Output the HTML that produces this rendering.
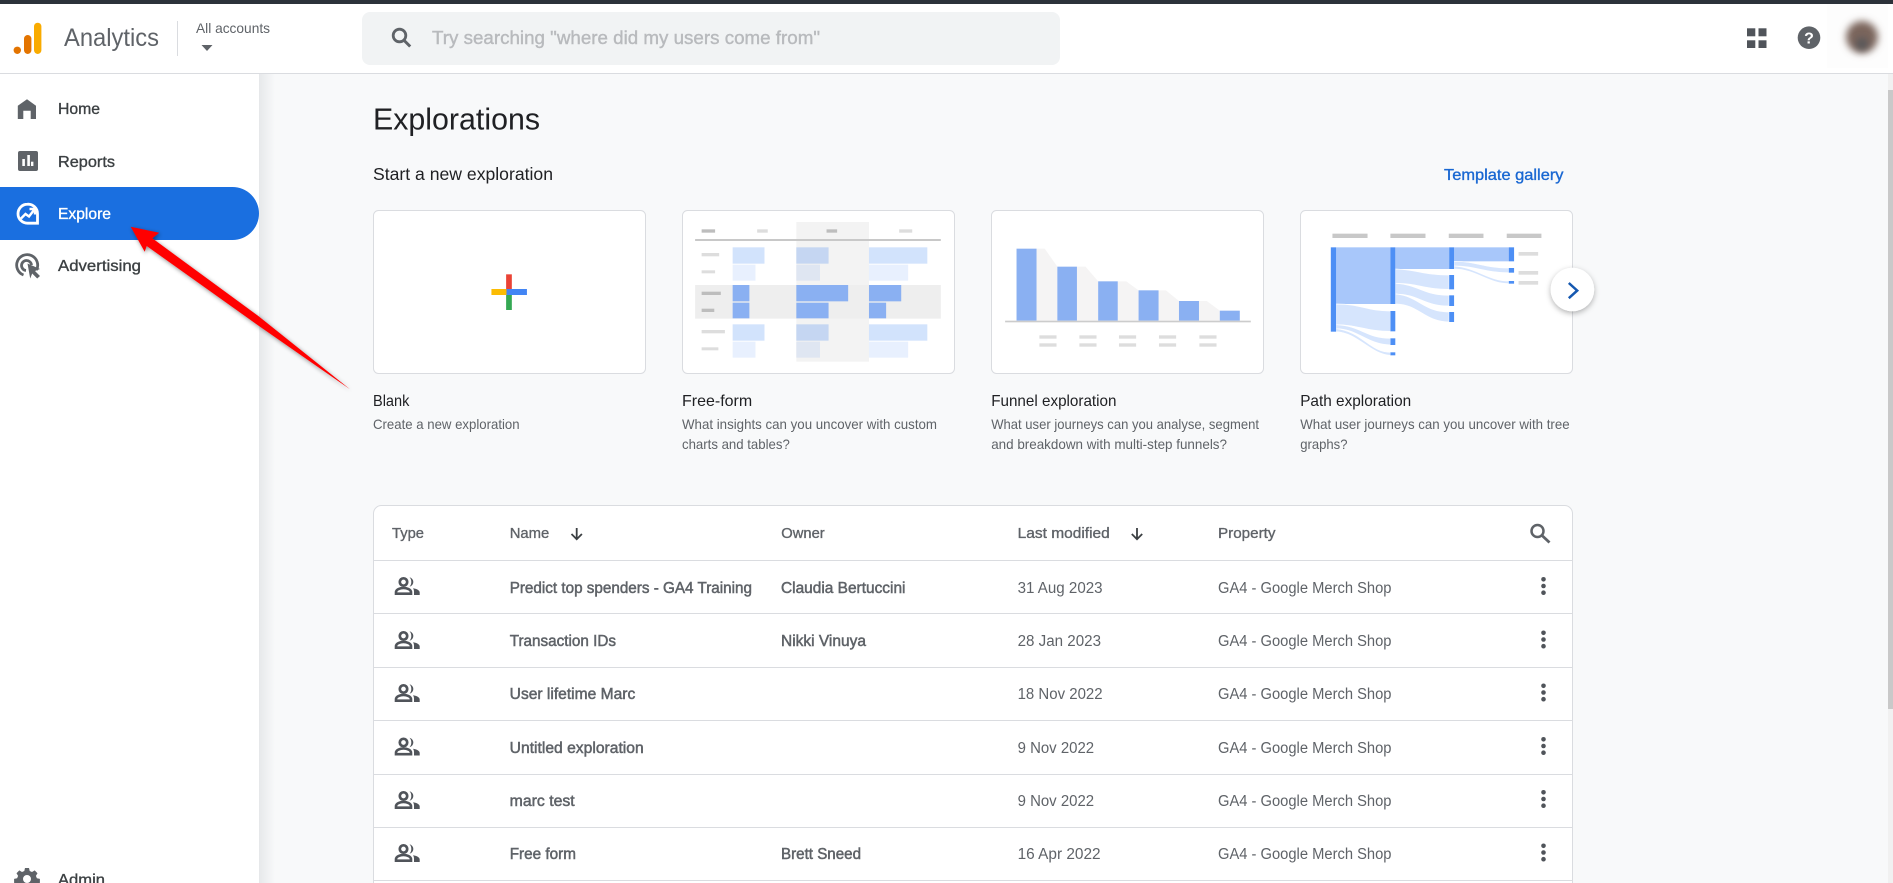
<!DOCTYPE html>
<html lang="en">
<head>
<meta charset="utf-8">
<title>Explorations - Analytics</title>
<style>
html,body{margin:0;padding:0;width:1893px;height:883px;overflow:hidden;background:#f8f9fa}
svg{display:block;position:absolute;left:0;top:0}
text{font-family:"Liberation Sans",sans-serif;white-space:pre}
.nav{font-size:16px;fill:#3c4043;stroke:#3c4043;stroke-width:.35px}
.th{font-size:15px;fill:#5f6368;stroke:#5f6368;stroke-width:.35px}
.nm{font-size:15.500px;fill:#5f6368;stroke:#5f6368;stroke-width:.5px}
.rg{font-size:15.500px;fill:#5f6368}
.ct{font-size:16px;fill:#202124}
.cd{font-size:14px;fill:#5f6368}
</style>
</head>
<body>
<svg width="1893" height="883" viewBox="0 0 1893 883" xmlns="http://www.w3.org/2000/svg">
<defs>
<linearGradient id="sd" x1="0" x2="1" y1="0" y2="0"><stop offset="0" stop-color="#e6e8ea"/><stop offset="1" stop-color="#f8f9fa"/></linearGradient>
<filter id="bl" x="-80%" y="-80%" width="260%" height="260%"><feGaussianBlur stdDeviation="3.600"/></filter>
<filter id="ds" x="-50%" y="-50%" width="200%" height="200%"><feDropShadow dx="0" dy="2" stdDeviation="3" flood-color="#000" flood-opacity=".3"/></filter>
<filter id="as" x="-20%" y="-20%" width="140%" height="140%"><feDropShadow dx="1" dy="1.500" stdDeviation="2" flood-color="#000" flood-opacity=".45"/></filter>
<g id="grp" fill="#50545a">
<circle cx="8.800" cy="5" r="3.700" fill="none" stroke="#50545a" stroke-width="2.700"/>
<path d="M14.800 .3a4.800 4.800 0 0 1 0 9.400c1.300-1.300 1.800-2.900 1.800-4.700s-.5-3.400-1.800-4.700z"/>
<path d="M1.300 16.700v-1.500c0-2.900 4.200-4.200 7.500-4.200s7.500 1.300 7.500 4.200v1.500z" fill="none" stroke="#50545a" stroke-width="2.600"/>
<path d="M18.300 11.200c3.200.5 6.700 1.800 6.700 4.300v2.500h-5.700v-2.800c0-1.600-.2-3-1-4z"/>
</g>
<g id="keb" fill="#50545a"><circle cx="0" cy="-6.700" r="2.300"/><circle cx="0" cy="0" r="2.300"/><circle cx="0" cy="6.700" r="2.300"/></g>
</defs>

<!-- main bg -->
<rect x="0" y="0" width="1893" height="883" fill="#f8f9fa"/>
<rect x="259" y="74" width="16" height="809" fill="url(#sd)"/>
<!-- scrollbar -->
<rect x="1888" y="74" width="5" height="809" fill="#f1f1f1"/>
<rect x="1888" y="90" width="5" height="619" fill="#c9c9c9"/>

<!-- header -->
<rect x="0" y="4" width="1893" height="69" fill="#fff"/>
<rect x="0" y="0" width="1893" height="4" fill="#2c323a"/>
<rect x="0" y="73" width="1893" height="1" fill="#dadce0"/>
<circle cx="17.300" cy="50.300" r="3.700" fill="#e37400"/>
<rect x="24" y="35" width="7.400" height="19" rx="3.700" fill="#e37400"/>
<rect x="34" y="22.700" width="7.400" height="31.300" rx="3.700" fill="#f9ab00"/>
<text x="64" y="46" font-size="25" fill="#5f6368" textLength="95" lengthAdjust="spacingAndGlyphs">Analytics</text>
<rect x="177" y="21" width="1" height="35" fill="#dadce0"/>
<text x="196" y="33" font-size="14" fill="#5f6368" textLength="74" lengthAdjust="spacingAndGlyphs">All accounts</text>
<path d="M201.500 45h11l-5.500 6z" fill="#5f6368"/>
<rect x="362" y="12" width="698" height="53" rx="8" fill="#f1f3f4"/>
<circle cx="399.500" cy="35.500" r="6.300" fill="none" stroke="#5f6368" stroke-width="2.800"/>
<path d="M404.200 40.500l6 6" stroke="#5f6368" stroke-width="3" fill="none"/>
<text x="432" y="44" font-size="18.500" fill="#b8babd" stroke="#b8babd" stroke-width=".4" textLength="388" lengthAdjust="spacingAndGlyphs">Try searching "where did my users come from"</text>
<g fill="#50545a"><rect x="1747" y="28.300" width="8.300" height="8"/><rect x="1758.500" y="28.300" width="8" height="8"/><rect x="1747" y="40.300" width="8.300" height="7.700"/><rect x="1758.500" y="40.300" width="8" height="7.700"/></g>
<circle cx="1809" cy="37.700" r="11.300" fill="#5f6368"/>
<text x="1809" y="43.500" font-size="16" font-weight="700" fill="#fff" text-anchor="middle">?</text>
<rect x="1827" y="4" width="61" height="64" fill="#fdfdfd"/>
<circle cx="1862" cy="37" r="16" fill="#7a655b" filter="url(#bl)"/>
<circle cx="1862" cy="44" r="6" fill="#55565a" filter="url(#bl)"/>

<!-- sidebar -->
<rect x="0" y="74" width="259" height="809" fill="#fff"/>
<path d="M0 187h232.500a26.500 26.500 0 0 1 0 53H0z" fill="#1a6fe0"/>
<path d="M27 99.300L36 105.800V119H30.700V110.700H23.300V119H17.800V105.800z" fill="#5f6368"/>
<rect x="18" y="151" width="20" height="20" rx="2" fill="#5f6368"/>
<g fill="#fff"><rect x="22.300" y="159" width="2.600" height="7"/><rect x="27.300" y="155" width="2.600" height="11"/><rect x="31" y="161.700" width="2.400" height="4.300"/></g>
<path d="M27.500 204.200a9.500 9.500 0 1 0 0 19h10v-9.500a9.500 9.500 0 0 0-10-9.500z" fill="none" stroke="#fff" stroke-width="2.800"/>
<path d="M21 218.500l4.500-4.500 3.500 2.500 5-6.500M29.500 209h5.500v5.500" fill="none" stroke="#fff" stroke-width="2.400"/>
<path d="M36.500 270a10.500 10.500 0 1 0-13 5" fill="none" stroke="#5f6368" stroke-width="2.800"/>
<path d="M31.500 265a5 5 0 1 0-5.500 5.500" fill="none" stroke="#5f6368" stroke-width="2.800"/>
<path d="M27.500 263.500l12.500 5.500-5 2 5 5-2.800 2.500-5-5-2 5z" fill="#5f6368"/>
<path d="M25 868h4l.7 3 2.300 1 2.700-1.600 2.800 2.800-1.600 2.700 1 2.300 3 .7v4l-3 .7-1 2.300 1.600 2.700-2.800 2.800-2.700-1.600-2.300 1-.7 3h-4l-.7-3-2.300-1-2.700 1.600-2.800-2.800 1.600-2.700-1-2.300-3-.7v-4l3-.7 1-2.300-1.600-2.700 2.800-2.800 2.700 1.600 2.300-1zM27 875a4 4 0 1 0 0 8 4 4 0 0 0 0-8z" fill="#5f6368" fill-rule="evenodd"/>
<text class="nav" x="58" y="114" textLength="42" lengthAdjust="spacingAndGlyphs">Home</text>
<text class="nav" x="58" y="167" textLength="57" lengthAdjust="spacingAndGlyphs">Reports</text>
<text class="nav" x="58" y="219" textLength="53" lengthAdjust="spacingAndGlyphs" style="fill:#fff;stroke:#fff">Explore</text>
<text class="nav" x="58" y="271" textLength="83" lengthAdjust="spacingAndGlyphs">Advertising</text>
<text class="nav" x="58" y="885" textLength="47" lengthAdjust="spacingAndGlyphs">Admin</text>

<!-- headings -->
<text x="373" y="129.500" font-size="31" fill="#202124" textLength="167" lengthAdjust="spacingAndGlyphs">Explorations</text>
<text x="373" y="180" font-size="17.500" fill="#202124" textLength="180" lengthAdjust="spacingAndGlyphs">Start a new exploration</text>
<text x="1444" y="180" font-size="16" fill="#1967d2" stroke="#1967d2" stroke-width=".35" textLength="119.500" lengthAdjust="spacingAndGlyphs">Template gallery</text>

<!-- cards -->
<g fill="#fff" stroke="#dadce0" stroke-width="1">
<rect x="373.500" y="210.500" width="272" height="163" rx="5"/>
<rect x="682.500" y="210.500" width="272" height="163" rx="5"/>
<rect x="991.500" y="210.500" width="272" height="163" rx="5"/>
<rect x="1300.500" y="210.500" width="272" height="163" rx="5"/>
</g>

<g transform="translate(340 190) scale(.40816 .33333)">
<rect x="407" y="253" width="14" height="53" fill="#ea4335"/>
<rect x="407" y="306" width="14" height="54" fill="#34a853"/>
<rect x="371" y="297" width="37" height="18" fill="#fbbc04"/>
<rect x="408" y="297" width="50" height="18" fill="#4285f4"/>
<!-- free form -->
<rect x="1118" y="96" width="178" height="419" fill="#f3f3f3"/>
<rect x="870" y="285" width="602" height="101" fill="#eeeeee"/>
<rect x="870" y="147" width="602" height="6" fill="#c8c8c8"/>
<g fill="#bdbdbd"><rect x="886" y="118" width="33" height="10"/><rect x="1192" y="118" width="26" height="10"/><rect x="886" y="305" width="47" height="10"/><rect x="886" y="356" width="31" height="10"/></g>
<g fill="#dddddd"><rect x="1022" y="118" width="26" height="10"/><rect x="1370" y="118" width="32" height="10"/><rect x="886" y="189" width="43" height="10"/><rect x="886" y="241" width="33" height="9"/><rect x="886" y="420" width="57" height="10"/><rect x="886" y="472" width="41" height="9"/></g>
<g fill="#d2e3fc"><rect x="962" y="172" width="78" height="49"/><rect x="962" y="403" width="78" height="49"/><rect x="1296" y="172" width="143" height="49"/><rect x="1296" y="403" width="143" height="49"/></g>
<g fill="#e8f0fe"><rect x="962" y="224" width="56" height="48"/><rect x="962" y="455" width="56" height="48"/><rect x="1296" y="224" width="96" height="48"/><rect x="1296" y="455" width="96" height="48"/></g>
<g fill="#c5d6f2"><rect x="1118" y="172" width="79" height="49"/><rect x="1118" y="403" width="79" height="49"/></g>
<g fill="#dfe6f2"><rect x="1118" y="224" width="58" height="48"/><rect x="1118" y="455" width="58" height="48"/></g>
<g fill="#8ab0f2"><rect x="962" y="285" width="41" height="49"/><rect x="962" y="338" width="41" height="47"/><rect x="1118" y="285" width="127" height="49"/><rect x="1118" y="338" width="79" height="47"/><rect x="1296" y="285" width="79" height="49"/><rect x="1296" y="338" width="42" height="47"/></g>
</g>

<g transform="translate(970 190) scale(.40816 .33333)">
<!-- funnel -->
<g fill="#f5f4f4">
<path d="M163 176H183L214 230V392H163z"/><path d="M262 230H283L314 274V392H262z"/><path d="M362 274H383L413 301V392H362z"/><path d="M462 301H480L512 333V392H462z"/><path d="M561 333H580L612 362V392H561z"/>
</g>
<g fill="#8ab0f2"><rect x="114" y="176" width="49" height="216"/><rect x="214" y="230" width="48" height="162"/><rect x="314" y="274" width="48" height="118"/><rect x="413" y="301" width="49" height="91"/><rect x="512" y="333" width="49" height="59"/><rect x="612" y="362" width="49" height="30"/></g>
<rect x="86" y="392" width="602" height="5" fill="#cccccc"/>
<g fill="#dddddd">
<rect x="170" y="436" width="42" height="10"/><rect x="268" y="436" width="42" height="10"/><rect x="365" y="436" width="42" height="10"/><rect x="463" y="436" width="42" height="10"/><rect x="562" y="436" width="42" height="10"/>
<rect x="170" y="460" width="42" height="10"/><rect x="268" y="460" width="42" height="10"/><rect x="365" y="460" width="42" height="10"/><rect x="463" y="460" width="42" height="10"/><rect x="562" y="460" width="42" height="10"/>
</g>
<!-- path -->
<g fill="#c8c8c8"><rect x="888" y="131" width="86" height="13"/><rect x="1030" y="131" width="86" height="13"/><rect x="1173" y="131" width="85" height="13"/><rect x="1315" y="131" width="85" height="13"/></g>
<g fill="#a8c7fa"><rect x="897" y="172" width="133" height="170"/><rect x="1042" y="172" width="132" height="65"/><rect x="1186" y="172" width="134" height="42"/></g>
<g fill="#d6e5fd" stroke="#fff" stroke-width="2">
<path d="M897 342C960 342 970 363 1030 363V424C970 424 950 404 897 404z"/>
<path d="M897 404C960 408 970 445 1030 445V465C970 462 950 416 897 416z"/>
<path d="M897 416C960 424 980 487 1030 487V496C980 492 950 428 897 425z"/>
<path d="M1042 237C1100 240 1110 255 1174 255V298C1110 298 1100 280 1042 280z"/>
<path d="M1042 280C1100 284 1110 316 1174 316V348C1110 348 1100 312 1042 312z"/>
<path d="M1042 312C1100 318 1110 366 1174 366V396C1110 394 1100 342 1042 342z"/>
<path d="M1186 214C1240 214 1260 234 1320 234V248C1260 248 1240 228 1186 228z"/>
<path d="M1186 228C1240 232 1270 273 1320 273V281C1270 281 1240 238 1186 237z"/>
</g>
<g fill="#4d8ff5">
<rect x="884" y="172" width="13" height="253"/>
<rect x="1030" y="172" width="12" height="170"/><rect x="1030" y="363" width="12" height="61"/><rect x="1030" y="445" width="12" height="20"/><rect x="1030" y="487" width="12" height="9"/>
<rect x="1174" y="172" width="12" height="65"/><rect x="1174" y="255" width="12" height="43"/><rect x="1174" y="316" width="12" height="32"/><rect x="1174" y="366" width="12" height="30"/>
<rect x="1320" y="172" width="13" height="42"/><rect x="1320" y="234" width="13" height="14"/><rect x="1320" y="273" width="13" height="8"/>
</g>
<g fill="#dddddd"><rect x="1344" y="186" width="48" height="11"/><rect x="1344" y="243" width="48" height="11"/><rect x="1344" y="273" width="48" height="11"/></g>
</g>

<circle cx="1572.400" cy="289.500" r="21.800" fill="#fff" filter="url(#ds)"/>
<path d="M1568.800 283l8.400 7.600-8.400 7.600" fill="none" stroke="#1558b0" stroke-width="2.500"/>

<text class="ct" x="373" y="406" textLength="36.400" lengthAdjust="spacingAndGlyphs">Blank</text>
<text class="ct" x="682" y="406" textLength="70.200" lengthAdjust="spacingAndGlyphs">Free-form</text>
<text class="ct" x="991.200" y="406" textLength="125.300" lengthAdjust="spacingAndGlyphs">Funnel exploration</text>
<text class="ct" x="1300.200" y="406" textLength="111" lengthAdjust="spacingAndGlyphs">Path exploration</text>
<text class="cd" x="373" y="429" textLength="146.600" lengthAdjust="spacingAndGlyphs">Create a new exploration</text>
<text class="cd" x="682" y="429" textLength="255" lengthAdjust="spacingAndGlyphs">What insights can you uncover with custom</text>
<text class="cd" x="682" y="449" textLength="107.800" lengthAdjust="spacingAndGlyphs">charts and tables?</text>
<text class="cd" x="991.200" y="429" textLength="267.800" lengthAdjust="spacingAndGlyphs">What user journeys can you analyse, segment</text>
<text class="cd" x="991.200" y="449" textLength="235.800" lengthAdjust="spacingAndGlyphs">and breakdown with multi-step funnels?</text>
<text class="cd" x="1300.200" y="429" textLength="269.400" lengthAdjust="spacingAndGlyphs">What user journeys can you uncover with tree</text>
<text class="cd" x="1300.200" y="449" textLength="47.300" lengthAdjust="spacingAndGlyphs">graphs?</text>

<!-- table -->
<rect x="373.500" y="505.500" width="1199" height="400" rx="8" fill="#fff" stroke="#dadce0"/>
<g fill="#dadce0">
<rect x="374" y="560" width="1198" height="1"/>
<rect x="374" y="613" width="1198" height="1"/>
<rect x="374" y="667" width="1198" height="1"/>
<rect x="374" y="720" width="1198" height="1"/>
<rect x="374" y="774" width="1198" height="1"/>
<rect x="374" y="827" width="1198" height="1"/>
<rect x="374" y="880" width="1198" height="1"/>
</g>
<text class="th" x="392" y="538" textLength="32" lengthAdjust="spacingAndGlyphs">Type</text>
<text class="th" x="509.700" y="538" textLength="39.600" lengthAdjust="spacingAndGlyphs">Name</text>
<text class="th" x="781.300" y="538" textLength="43.400" lengthAdjust="spacingAndGlyphs">Owner</text>
<text class="th" x="1017.600" y="538" textLength="92.200" lengthAdjust="spacingAndGlyphs">Last modified</text>
<text class="th" x="1218" y="538" textLength="57.500" lengthAdjust="spacingAndGlyphs">Property</text>
<path d="M576.700 528v11M571.500 534l5.200 5.200 5.200-5.200" fill="none" stroke="#3c4043" stroke-width="1.800"/>
<path d="M1137 528v11M1131.800 534l5.200 5.200 5.200-5.200" fill="none" stroke="#3c4043" stroke-width="1.800"/>
<circle cx="1537.500" cy="531" r="6" fill="none" stroke="#5f6368" stroke-width="2.500"/>
<path d="M1542 535.500l7.500 7" stroke="#5f6368" stroke-width="2.800" fill="none"/>

<use href="#grp" x="394.700" y="577"/>
<use href="#grp" x="394.700" y="631"/>
<use href="#grp" x="394.700" y="684"/>
<use href="#grp" x="394.700" y="737.500"/>
<use href="#grp" x="394.700" y="791"/>
<use href="#grp" x="394.700" y="844"/>
<use href="#keb" x="1543.500" y="586"/>
<use href="#keb" x="1543.500" y="639.500"/>
<use href="#keb" x="1543.500" y="692.500"/>
<use href="#keb" x="1543.500" y="746"/>
<use href="#keb" x="1543.500" y="799"/>
<use href="#keb" x="1543.500" y="852.500"/>

<text class="nm" x="509.700" y="593" textLength="242.300" lengthAdjust="spacingAndGlyphs">Predict top spenders - GA4 Training</text>
<text class="nm" x="781" y="593" textLength="124.500" lengthAdjust="spacingAndGlyphs">Claudia Bertuccini</text>
<text class="rg" x="1017.600" y="593" textLength="85" lengthAdjust="spacingAndGlyphs">31 Aug 2023</text>
<text class="rg" x="1218" y="593" textLength="173.500" lengthAdjust="spacingAndGlyphs">GA4 - Google Merch Shop</text>

<text class="nm" x="509.700" y="646" textLength="106.300" lengthAdjust="spacingAndGlyphs">Transaction IDs</text>
<text class="nm" x="781" y="646" textLength="85" lengthAdjust="spacingAndGlyphs">Nikki Vinuya</text>
<text class="rg" x="1017.600" y="646" textLength="83.400" lengthAdjust="spacingAndGlyphs">28 Jan 2023</text>
<text class="rg" x="1218" y="646" textLength="173.500" lengthAdjust="spacingAndGlyphs">GA4 - Google Merch Shop</text>

<text class="nm" x="509.700" y="699" textLength="125.600" lengthAdjust="spacingAndGlyphs">User lifetime Marc</text>
<text class="rg" x="1017.600" y="699" textLength="85" lengthAdjust="spacingAndGlyphs">18 Nov 2022</text>
<text class="rg" x="1218" y="699" textLength="173.500" lengthAdjust="spacingAndGlyphs">GA4 - Google Merch Shop</text>

<text class="nm" x="509.700" y="753" textLength="134" lengthAdjust="spacingAndGlyphs">Untitled exploration</text>
<text class="rg" x="1017.600" y="753" textLength="76.500" lengthAdjust="spacingAndGlyphs">9 Nov 2022</text>
<text class="rg" x="1218" y="753" textLength="173.500" lengthAdjust="spacingAndGlyphs">GA4 - Google Merch Shop</text>

<text class="nm" x="509.700" y="806" textLength="65" lengthAdjust="spacingAndGlyphs">marc test</text>
<text class="rg" x="1017.600" y="806" textLength="76.500" lengthAdjust="spacingAndGlyphs">9 Nov 2022</text>
<text class="rg" x="1218" y="806" textLength="173.500" lengthAdjust="spacingAndGlyphs">GA4 - Google Merch Shop</text>

<text class="nm" x="509.700" y="859" textLength="66.300" lengthAdjust="spacingAndGlyphs">Free form</text>
<text class="nm" x="781" y="859" textLength="80" lengthAdjust="spacingAndGlyphs">Brett Sneed</text>
<text class="rg" x="1017.600" y="859" textLength="83" lengthAdjust="spacingAndGlyphs">16 Apr 2022</text>
<text class="rg" x="1218" y="859" textLength="173.500" lengthAdjust="spacingAndGlyphs">GA4 - Google Merch Shop</text>

<!-- red annotation arrow -->
<path d="M130.700 226.700L159.300 232.700 152.300 238.300 258.300 316 350 389.300 258.300 325.500 146.700 246 144.700 251.700z" fill="#ff0000" filter="url(#as)"/>
</svg>
</body>
</html>
